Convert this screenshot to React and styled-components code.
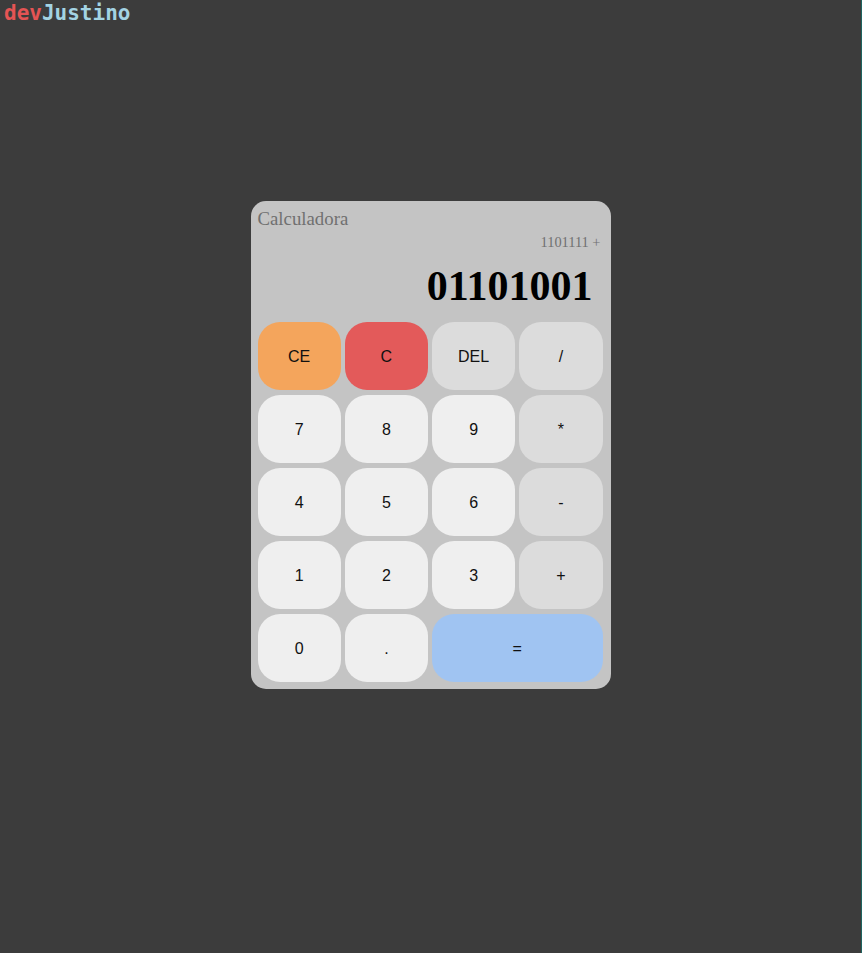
import React from "react";
import styled, { createGlobalStyle } from "styled-components";

const GlobalStyle = createGlobalStyle`
  html, body {
    margin: 0;
    padding: 0;
    background: #3c3c3c;
  }
  * { box-sizing: border-box; }
`;

const Page = styled.div`
  min-height: 100vh;
  border-right: 1px solid #1f6460;
  display: flex;
  flex-direction: column;
  align-items: center;
`;

const Logo = styled.div`
  align-self: flex-start;
  padding: 1px 0 0 4px;
  font-family: "DejaVu Sans Mono", monospace;
  font-weight: bold;
  font-size: 21px;
  line-height: 25px;
  color: #a3d3e3;
  span { color: #e55454; }
`;

const Card = styled.div`
  margin-top: 175px;
  width: 360px;
  padding: 7px 8px 7px 7px;
  background: #c4c4c4;
  border-radius: 15px;
`;

const Display = styled.div`
  display: flex;
  flex-direction: column;
  height: 114px;
  font-family: "Liberation Serif", "Times New Roman", serif;
`;

const Title = styled.div`
  font-size: 18.8px;
  line-height: 21px;
  color: #707070;
`;

const Previous = styled.div`
  margin-top: 5px;
  text-align: right;
  padding-right: 2px;
  font-size: 14.4px;
  line-height: 16px;
  color: #707070;
`;

const Current = styled.div`
  margin-top: 13px;
  text-align: right;
  padding-right: 10px;
  font-size: 42px;
  font-weight: bold;
  line-height: 46px;
  color: #000;
`;

const Keys = styled.div`
  display: grid;
  grid-template-columns: repeat(4, 1fr);
  grid-auto-rows: 68px;
  column-gap: 4px;
  row-gap: 5px;
`;

const tones = {
  orange: "#f4a55c",
  red: "#e35a5a",
  op: "#dcdcdc",
  num: "#efefef",
  blue: "#a0c4f2",
};

const Key = styled.button`
  grid-column: span ${(p) => p.span || 1};
  border: none;
  border-radius: 22px;
  padding: 1px 0 0;
  background: ${(p) => tones[p.tone || "num"]};
  font-family: "Liberation Sans", Arial, sans-serif;
  font-size: 16px;
  color: #111;
  cursor: pointer;
`;

const keys = [
  ["CE", "orange"], ["C", "red"], ["DEL", "op"], ["/", "op"],
  ["7"], ["8"], ["9"], ["*", "op"],
  ["4"], ["5"], ["6"], ["-", "op"],
  ["1"], ["2"], ["3"], ["+", "op"],
  ["0"], ["."], ["=", "blue", 2],
];

export default function App() {
  return (
    <>
      <GlobalStyle />
      <Page>
        <Logo><span>dev</span>Justino</Logo>
        <Card>
          <Display>
            <Title>Calculadora</Title>
            <Previous>1101111 +</Previous>
            <Current>01101001</Current>
          </Display>
          <Keys>
            {keys.map(([label, tone, span]) => (
              <Key key={label} tone={tone} span={span}>{label}</Key>
            ))}
          </Keys>
        </Card>
      </Page>
    </>
  );
}
